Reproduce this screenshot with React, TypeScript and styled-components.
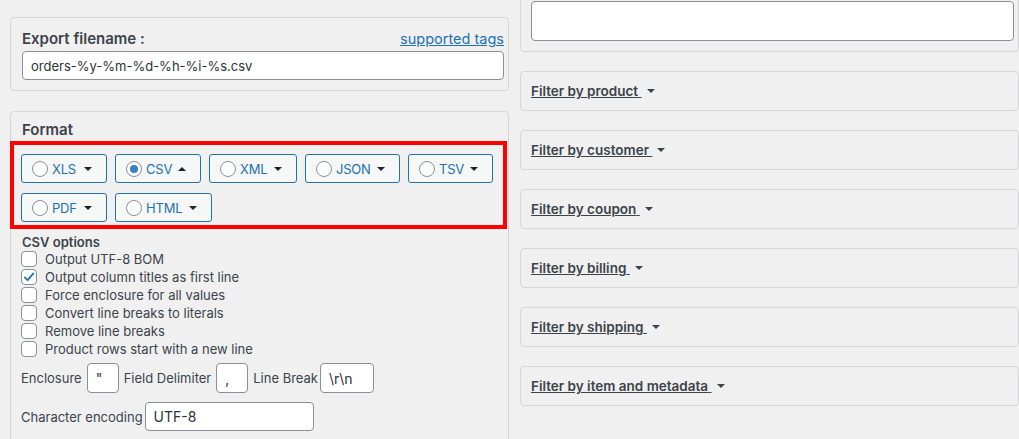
import * as React from "react";
import styled, { createGlobalStyle } from "styled-components";

const GlobalStyle = createGlobalStyle`
  body {
    margin: 0;
    background: #f0f0f1;
    font-family: Inter, "Noto Sans", "Liberation Sans", sans-serif;
    color: #3c434a;
    overflow: hidden;
  }
`;

const Page = styled.div`
  display: grid;
  grid-template-columns: 499px 499px;
  column-gap: 11px;
  padding-left: 10px;
  align-items: start;
`;

const LeftColumn = styled.div`
  display: flex;
  flex-direction: column;
  gap: 20px;
  padding-top: 17px;
`;

const RightColumn = styled.div`
  display: flex;
  flex-direction: column;
  gap: 19px;
  margin-top: -11px;
`;

const Panel = styled.section<{ $pad: string }>`
  border: 1px solid #d6d6d8;
  border-radius: 4px;
  padding: ${(p) => p.$pad};
`;

const TitleRow = styled.div`
  display: flex;
  justify-content: space-between;
  align-items: baseline;
  height: 18px;
  margin-bottom: 3px;
`;

const Heading = styled.h3`
  margin: 0;
  font-size: 15px;
  font-weight: 600;
  line-height: 18px;
  color: #3c434a;
`;

const TagsLink = styled.a`
  font-size: 14.5px;
  color: #2271b1;
  text-decoration: underline;
  line-height: 18px;
`;

const TextInput = styled.input<{ $width?: string; $height?: number; $size?: number }>`
  box-sizing: border-box;
  width: ${(p) => p.$width ?? "100%"};
  height: ${(p) => p.$height ?? 29}px;
  border: 1px solid #8c8f94;
  border-radius: 4px;
  background: #fff;
  padding: 0 8px;
  font-family: inherit;
  font-size: ${(p) => p.$size ?? 14}px;
  color: #2c3338;
  outline: none;
`;

const Highlight = styled.div`
  display: flex;
  flex-wrap: wrap;
  gap: 10px 8px;
  margin: 2px -3px 0 -12px;
  border: 4px solid #ff0000;
  padding: 9px 0 3px 7px;
`;

const FormatButton = styled.button<{ $width: number }>`
  display: inline-flex;
  align-items: center;
  box-sizing: border-box;
  width: ${(p) => p.$width}px;
  height: 29px;
  padding: 0 14px 0 10px;
  border: 1px solid #2271b1;
  border-radius: 3px;
  background: #f6f7f7;
  color: #2271b1;
  font-family: inherit;
  font-size: 13px;
  letter-spacing: -0.2px;
  cursor: pointer;
`;

const Radio = styled.span<{ $checked?: boolean }>`
  box-sizing: border-box;
  flex-shrink: 0;
  width: 16px;
  height: 16px;
  margin-right: 4px;
  border: 1px solid #8c8f94;
  border-radius: 50%;
  background: #fff;
  display: inline-flex;
  align-items: center;
  justify-content: center;

  &::after {
    content: "";
    display: ${(p) => (p.$checked ? "block" : "none")};
    width: 8px;
    height: 8px;
    border-radius: 50%;
    background: #3582c4;
  }
`;

const Caret = styled.span<{ $up?: boolean; $gap: string; $color: string }>`
  flex-shrink: 0;
  width: 0;
  height: 0;
  margin-left: ${(p) => p.$gap};
  border-left: 4px solid transparent;
  border-right: 4px solid transparent;
  ${(p) =>
    p.$up
      ? `border-bottom: 4px solid ${p.$color};`
      : `border-top: 4px solid ${p.$color};`}
`;

const OptionsLabel = styled.div`
  margin-top: 5px;
  font-size: 13px;
  font-weight: 600;
  line-height: 16px;
`;

const CheckList = styled.div`
  display: flex;
  flex-direction: column;
  margin-left: -1px;
`;

const CheckRow = styled.label`
  display: flex;
  align-items: center;
  height: 18px;
  gap: 8px;
  font-size: 13px;
  color: #3c434a;
`;

const Box = styled.span`
  box-sizing: border-box;
  width: 16px;
  height: 16px;
  border: 1px solid #8c8f94;
  border-radius: 4px;
  background: #fff;
  display: inline-flex;
  align-items: center;
  justify-content: center;
`;

const FieldRow = styled.div<{ $top: number; $height: number }>`
  display: flex;
  align-items: center;
  height: ${(p) => p.$height}px;
  margin-top: ${(p) => p.$top}px;
  margin-left: -1px;
  font-size: 13px;
  color: #3c434a;
`;

const FieldLabel = styled.span<{ $gap: number }>`
  margin-right: ${(p) => p.$gap}px;
  white-space: nowrap;
`;

const Spacer = styled.span`
  width: 5px;
`;

const TextArea = styled.textarea`
  display: block;
  box-sizing: border-box;
  width: 100%;
  height: 40px;
  border: 1px solid #8c8f94;
  border-radius: 4px;
  background: #fff;
  resize: none;
  outline: none;
`;

const FilterPanel = styled.section`
  box-sizing: border-box;
  height: 40px;
  display: flex;
  align-items: center;
  padding: 0 10px;
  border: 1px solid #d6d6d8;
  border-radius: 4px;
`;

const FilterTitle = styled.span`
  font-size: 13.5px;
  font-weight: 600;
  color: #3c434a;
  text-decoration: underline;
  white-space: pre;
  cursor: pointer;
`;

const formats = [
  { name: "XLS", width: 86 },
  { name: "CSV", width: 86 },
  { name: "XML", width: 88 },
  { name: "JSON", width: 95 },
  { name: "TSV", width: 85 },
  { name: "PDF", width: 86 },
  { name: "HTML", width: 97 },
];

const csvOptions = [
  { label: "Output UTF-8 BOM", checked: false },
  { label: "Output column titles as first line", checked: true },
  { label: "Force enclosure for all values", checked: false },
  { label: "Convert line breaks to literals", checked: false },
  { label: "Remove line breaks", checked: false },
  { label: "Product rows start with a new line", checked: false },
];

const filters = [
  "Filter by product",
  "Filter by customer",
  "Filter by coupon",
  "Filter by billing",
  "Filter by shipping",
  "Filter by item and metadata",
];

const CheckMark = () => (
  <svg width="12" height="12" viewBox="0 0 12 12">
    <path
      d="M1.8 6.4 L4.6 9.2 L10.4 2.4"
      fill="none"
      stroke="#2271b1"
      strokeWidth="1.8"
      strokeLinecap="round"
      strokeLinejoin="round"
    />
  </svg>
);

export default function App() {
  return (
    <>
      <GlobalStyle />
      <Page>
        <LeftColumn>
          <Panel $pad="12px 4px 10px 11px">
            <TitleRow>
              <Heading>Export filename :</Heading>
              <TagsLink href="#">supported tags</TagsLink>
            </TitleRow>
            <TextInput readOnly value="orders-%y-%m-%d-%h-%i-%s.csv" $size={13} />
          </Panel>

          <Panel $pad="9px 4px 20px 11px">
            <Heading>Format</Heading>
            <Highlight>
              {formats.map((f) => (
                <FormatButton key={f.name} type="button" $width={f.width}>
                  <Radio $checked={f.name === "CSV"} />
                  {f.name}
                  <Caret $up={f.name === "CSV"} $gap="auto" $color="#1d2327" />
                </FormatButton>
              ))}
            </Highlight>

            <OptionsLabel>CSV options</OptionsLabel>
            <CheckList>
              {csvOptions.map((o) => (
                <CheckRow key={o.label}>
                  <Box>{o.checked && <CheckMark />}</Box>
                  {o.label}
                </CheckRow>
              ))}
            </CheckList>

            <FieldRow $top={5} $height={30}>
              <FieldLabel $gap={5}>Enclosure</FieldLabel>
              <TextInput readOnly value={'"'} $width="32px" $height={30} />
              <Spacer />
              <FieldLabel $gap={5}>Field Delimiter</FieldLabel>
              <TextInput readOnly value="," $width="32px" $height={30} />
              <Spacer />
              <FieldLabel $gap={2}>Line Break</FieldLabel>
              <TextInput readOnly value="\r\n" $width="54px" $height={30} />
            </FieldRow>

            <FieldRow $top={9} $height={29}>
              <FieldLabel $gap={2}>Character encoding</FieldLabel>
              <TextInput readOnly value="UTF-8" $width="169px" />
            </FieldRow>
          </Panel>
        </LeftColumn>

        <RightColumn>
          <Panel $pad="11px 4px 10px 10px">
            <TextArea readOnly />
          </Panel>
          {filters.map((f) => (
            <FilterPanel key={f}>
              <FilterTitle>{f} </FilterTitle>
              <Caret $gap="5px" $color="#3c434a" />
            </FilterPanel>
          ))}
        </RightColumn>
      </Page>
    </>
  );
}
